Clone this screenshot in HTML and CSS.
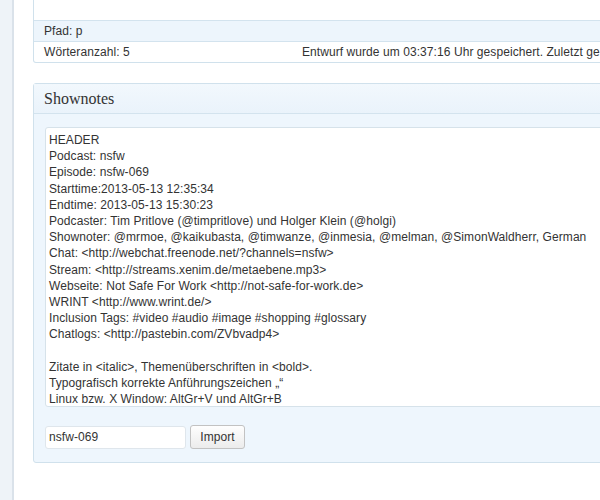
FILE: index.html
```html
<!DOCTYPE html>
<html lang="de">
<head>
<meta charset="utf-8">
<title>Shownotes</title>
<link rel="stylesheet" href="styles.css">
</head>
<body>
<div class="layout">
  <div class="sidebar"></div>
  <div class="main">
    <div class="editor">
      <div class="editor-area"></div>
      <div class="status-row path">Pfad: p</div>
      <div class="status-row words">
        <span class="count">Wörteranzahl: 5</span>
        <span class="saved">Entwurf wurde um 03:37:16 Uhr gespeichert. Zuletzt ge</span>
      </div>
    </div>
    <div class="panel">
      <div class="panel-head">Shownotes</div>
      <div class="panel-body">
        <div class="notes">HEADER
Podcast: nsfw
Episode: nsfw-069
Starttime:2013-05-13 12:35:34
Endtime: 2013-05-13 15:30:23
Podcaster: Tim Pritlove (@timpritlove) und Holger Klein (@holgi)
Shownoter: @mrmoe, @kaikubasta, @timwanze, @inmesia, @melman, @SimonWaldherr, German
Chat: &lt;http://webchat.freenode.net/?channels=nsfw&gt;
Stream: &lt;http://streams.xenim.de/metaebene.mp3&gt;
Webseite: Not Safe For Work &lt;http://not-safe-for-work.de&gt;
WRINT &lt;http://www.wrint.de/&gt;
Inclusion Tags: #video #audio #image #shopping #glossary
Chatlogs: &lt;http://pastebin.com/ZVbvadp4&gt;

Zitate in &lt;italic&gt;, Themenüberschriften in &lt;bold&gt;.
Typografisch korrekte Anführungszeichen „“
Linux bzw. X Window: AltGr+V und AltGr+B</div>
        <div class="import-row">
          <div class="field">nsfw-069</div>
          <div class="button">Import</div>
        </div>
      </div>
    </div>
  </div>
</div>
</body>
</html>
```
FILE: styles.css
```css
html, body {
  margin: 0;
  padding: 0;
  background: #fff;
  overflow: hidden;
}
body {
  font-family: "Liberation Sans", Arial, sans-serif;
  font-size: 12px;
  letter-spacing: 0.07px;
  color: #333;
}
.layout {
  display: flex;
  height: 500px;
  width: 760px;
}
.sidebar {
  width: 12px;
  background: #eef3f8;
  border-right: 2px solid #dae2ea;
  flex: none;
}
.main {
  padding-left: 19px;
  flex: 1;
}
.editor {
  border: 1px solid #d0e1ec;
  border-top: none;
  border-radius: 0 0 3px 3px;
  background: #fff;
}
.editor-area {
  height: 20px;
}
.status-row {
  border-top: 1px solid #d3e3ee;
  height: 20px;
  line-height: 20px;
  padding-left: 10px;
  white-space: nowrap;
  display: flex;
}
.path {
  background: #edf5fc;
}
.count {
  width: 258px;
  flex: none;
}
.panel {
  margin-top: 20px;
  border: 1px solid #d0e1ec;
  border-radius: 3px;
  background: #eef6fd;
}
.panel-head {
  height: 29px;
  line-height: 30px;
  padding-left: 10px;
  font-family: "Liberation Serif", Georgia, serif;
  font-size: 16px;
  letter-spacing: 0;
  color: #333;
  border-bottom: 1px solid #d3e3ee;
  background: linear-gradient(#f2f8fd, #eaf3fb);
}
.panel-body {
  padding: 13px 0 13px 11px;
}
.notes {
  height: 270px;
  border: 1px solid #d6e2ea;
  border-radius: 3px 0 0 3px;
  background: #fff;
  padding: 4px 0 4px 3px;
  white-space: pre;
  line-height: 16.2px;
  color: #333;
}
.import-row {
  display: flex;
  align-items: center;
  gap: 4px;
  margin-top: 18px;
}
.field {
  width: 136px;
  height: 21px;
  line-height: 21px;
  padding-left: 3px;
  border: 1px solid #dfe6ec;
  border-radius: 3px;
  background: #fff;
}
.button {
  width: 53px;
  height: 22px;
  line-height: 22px;
  text-align: center;
  border: 1px solid #c2c2c2;
  border-radius: 3px;
  background: linear-gradient(#fefefe, #ececec);
  color: #333;
}
```
